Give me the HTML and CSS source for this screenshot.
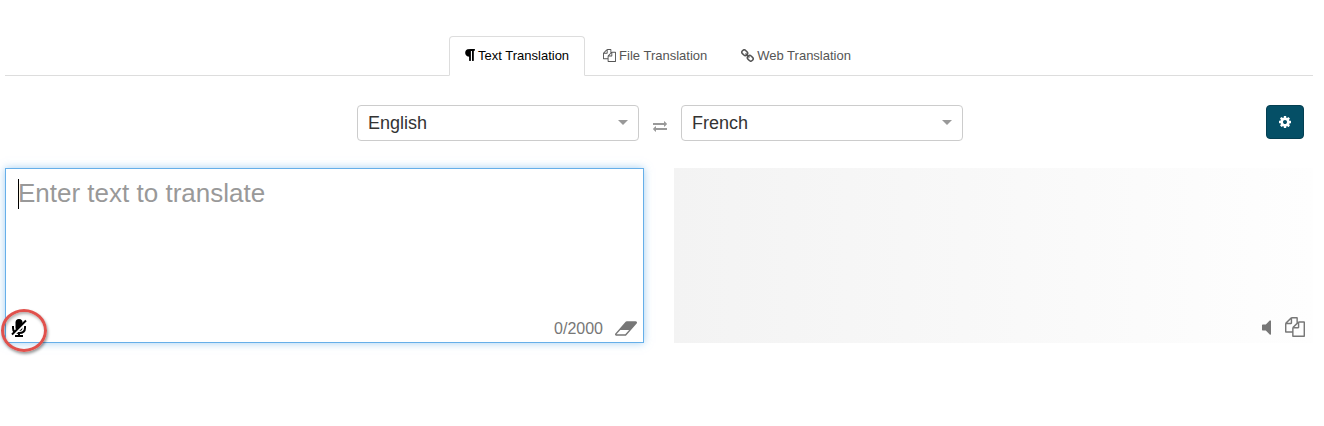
FILE: index.html
```html
<!DOCTYPE html>
<html lang="en">
<head>
  <meta charset="UTF-8">
  <meta name="viewport" content="width=device-width, initial-scale=1">
  <title>Text Translation</title>
  <link rel="stylesheet" href="styles.css">
</head>
<body>
  <nav class="tabs">
    <a class="tab active" href="#text">
      <svg class="icon-paragraph" viewBox="256 128 1280 1536"><path d="M1534 189v73q0 29-18.5 61t-42.5 32q-50 0-54 1-26 6-32 31-3 11-3 64v1152q0 25-18 43t-43 18h-108q-25 0-43-18t-18-43v-1218h-143v1218q0 25-17.5 43t-43.5 18h-108q-26 0-43.5-18t-17.5-43v-496q-147-12-245-59-126-58-192-179-64-117-64-259 0-166 88-286 88-118 209-159 111-37 417-37h479q25 0 43 18t18 43z"/></svg>
      Text Translation
    </a>
    <a class="tab" href="#file">
      <svg class="icon-tab" viewBox="0 0 1792 1792"><path d="M1696 384q40 0 68 28t28 68v1216q0 40-28 68t-68 28h-960q-40 0-68-28t-28-68v-288h-544q-40 0-68-28t-28-68v-672q0-40 20-88t48-76l408-408q28-28 76-48t88-20h416q40 0 68 28t28 68v328q68-40 128-40h416zm-544 213l-299 299h299v-299zm-640-384l-299 299h299v-299zm196 647l316-316v-416h-384v416q0 40-28 68t-68 28h-416v640h512v-256q0-40 20-88t48-76zm956 804v-1152h-384v416q0 40-28 68t-68 28h-416v640h896z"/></svg>
      File Translation
    </a>
    <a class="tab" href="#web">
      <svg class="icon-tab icon-link" viewBox="0 0 26 26"><rect x="1.500" y="3" width="12" height="9" rx="4" transform="rotate(45 7.500 7.500)"/><rect x="12.500" y="14" width="12" height="9" rx="4" transform="rotate(45 18.500 18.500)"/><path d="M9 9l8 8"/></svg>
      Web Translation
    </a>
  </nav>

  <main>
    <div class="toolbar">
      <div class="languages">
        <div class="language">
          <select id="source" aria-label="Source language">
            <option>English</option>
            <option>French</option>
          </select>
        </div>
        <button class="icon-button swap" type="button" aria-label="Swap languages">
          <svg viewBox="0 128 1792 1536"><path d="M1792 1184v192q0 13-9.5 22.5t-22.5 9.5h-1376v192q0 13-9.5 22.5t-22.5 9.5q-12 0-24-10l-319-320q-9-9-9-22 0-14 9-23l320-320q9-9 23-9 13 0 22.5 9.5t9.5 22.5v192h1376q13 0 22.5 9.5t9.5 22.5zm0-544q0 14-9 23l-320 320q-9 9-23 9-13 0-22.5-9.5t-9.5-22.5v-192h-1376q-13 0-22.5-9.5t-9.5-22.5v-192q0-13 9.5-22.5t22.5-9.5h1376v-192q0-14 9-23t23-9q12 0 24 10l319 319q9 9 9 23z"/></svg>
        </button>
        <div class="language">
          <select id="target" aria-label="Target language">
            <option>French</option>
            <option>English</option>
          </select>
        </div>
      </div>
      <button class="settings" type="button" aria-label="Settings">
        <svg viewBox="128 128 1536 1536"><path d="M1152 896q0-106-75-181t-181-75-181 75-75 181 75 181 181 75 181-75 75-181zm512-109v222q0 12-8 23t-20 13l-185 28q-19 54-39 91 35 50 107 138 10 12 10 25t-9 23q-27 37-99 108t-94 71q-12 0-26-9l-138-108q-44 23-91 38-16 136-29 186-7 28-36 28h-222q-14 0-24.5-8.5t-11.5-21.5l-28-184q-49-16-90-37l-141 107q-10 9-25 9-14 0-25-11-126-114-165-168-7-10-7-23 0-12 8-23 15-21 51-66.5t54-70.5q-27-50-41-99l-183-27q-13-2-21-12.5t-8-23.5v-222q0-12 8-23t19-13l186-28q14-46 39-92-40-57-107-138-10-12-10-24 0-10 9-23 26-36 98.5-107.5t94.5-71.5q13 0 26 10l138 107q44-23 91-38 16-136 29-186 7-28 36-28h222q14 0 24.5 8.5t11.5 21.5l28 184q49 16 90 37l142-107q9-9 24-9 13 0 25 10 129 119 165 170 7 8 7 22 0 12-8 23-15 21-51 66.5t-54 70.5q26 50 41 98l183 28q13 2 21 12.5t8 23.5z"/></svg>
      </button>
    </div>

    <div class="panels">
      <div class="panel input-panel">
        <textarea id="text" aria-label="Text to translate" placeholder="Enter text to translate"></textarea>
        <span class="caret"></span>
        <div class="panel-footer">
          <button class="icon-button mic" type="button" aria-label="Microphone">
            <svg viewBox="0 0 16 18">
              <rect x="4.500" y="0" width="7" height="12" rx="3.500"/>
              <path class="line" d="M2 7v2q0 5 6 5t6-5v-2M8 14v3M4 17h8"/>
              <path class="gap" d="M1 17L16 2.500"/>
              <path class="line" d="M1 15.500L15 1.500"/>
            </svg>
            <span class="ring"></span>
          </button>
          <span class="counter">0/2000</span>
          <button class="icon-button eraser" type="button" aria-label="Clear text">
            <svg viewBox="-64 256 1920 1280"><path d="M832 1408l336-384h-768l-336 384h768zm1013-1077q15 34 9.500 71.500t-30.500 65.500l-896 1024q-38 44-96 44h-768q-38 0-69.500-20.500t-47.500-54.500q-15-34-9.500-71.500t30.500-65.500l896-1024q38-44 96-44h768q38 0 69.500 20.500t47.500 54.500z"/></svg>
          </button>
        </div>
      </div>

      <div class="panel output-panel">
        <div class="panel-footer">
          <button class="icon-button speaker" type="button" aria-label="Listen">
            <svg viewBox="320 256 768 1280"><path d="M1088 352v1088q0 26-19 45t-45 19-45-19l-333-333h-262q-26 0-45-19t-19-45v-384q0-26 19-45t45-19h262l333-333q19-19 45-19t45 19 19 45z"/></svg>
          </button>
          <button class="icon-button copy" type="button" aria-label="Copy translation">
            <svg viewBox="0 0 1792 1792"><path d="M1696 384q40 0 68 28t28 68v1216q0 40-28 68t-68 28h-960q-40 0-68-28t-28-68v-288h-544q-40 0-68-28t-28-68v-672q0-40 20-88t48-76l408-408q28-28 76-48t88-20h416q40 0 68 28t28 68v328q68-40 128-40h416zm-544 213l-299 299h299v-299zm-640-384l-299 299h299v-299zm196 647l316-316v-416h-384v416q0 40-28 68t-68 28h-416v640h512v-256q0-40 20-88t48-76zm956 804v-1152h-384v416q0 40-28 68t-68 28h-416v640h896z"/></svg>
          </button>
        </div>
      </div>
    </div>
  </main>
</body>
</html>
```

FILE: styles.css
```css
* {
  box-sizing: border-box;
}
body {
  min-height: 100vh;
  margin: 0;
  padding: 36px 11px 40px 5px;
  background: #fff;
  color: #333;
  font-family: "Liberation Sans", Arial, sans-serif;
  font-size: 13px;
}
svg {
  display: block;
  fill: currentColor;
}
button,
select,
textarea {
  font-family: inherit;
}
.tabs {
  display: flex;
  justify-content: center;
  gap: 2px;
  padding-right: 2px;
  border-bottom: 1px solid #ddd;
}
.tab {
  display: flex;
  align-items: center;
  gap: 3px;
  height: 40px;
  margin-bottom: -1px;
  padding: 0 15px 2px;
  border: 1px solid transparent;
  border-radius: 4px 4px 0 0;
  color: #555;
  text-decoration: none;
}
.tab.active {
  border-color: #ddd #ddd #fff;
  background: #fff;
  color: #000;
}
.icon-paragraph {
  width: 10px;
  height: 12px;
}
.icon-tab {
  width: 13px;
  height: 13px;
}
.icon-link {
  fill: none;
  stroke: currentColor;
  stroke-width: 3;
}
.toolbar {
  display: grid;
  grid-template-columns: 1fr auto 1fr;
  padding: 29px 9px 27px 11px;
}
.languages {
  grid-column: 2;
  display: flex;
  align-items: center;
  gap: 14px;
}
.language {
  position: relative;
}
.language::after {
  content: "";
  position: absolute;
  top: 15px;
  right: 11px;
  border: 5px solid transparent;
  border-top-color: #999;
  border-bottom: 0;
  pointer-events: none;
}
select {
  display: block;
  appearance: none;
  width: 282px;
  height: 36px;
  padding: 0 10px;
  border: 1px solid #ccc;
  border-radius: 4px;
  background: #fff;
  color: #333;
  font-size: 18px;
}
.icon-button {
  padding: 0;
  border: 0;
  background: none;
  color: #777;
  cursor: pointer;
}
.swap {
  padding-top: 6px;
  color: #999;
}
.swap svg {
  width: 14px;
  height: 12px;
}
.settings {
  justify-self: end;
  display: flex;
  align-items: center;
  justify-content: center;
  width: 38px;
  height: 34px;
  padding: 0;
  border: 1px solid #043f52;
  border-radius: 4px;
  background: #054f66;
  color: #fff;
  cursor: pointer;
}
.settings svg {
  width: 12px;
  height: 12px;
}
.panels {
  display: grid;
  grid-template-columns: 1fr 1fr;
  gap: 30px;
}
.panel {
  position: relative;
  display: flex;
  flex-direction: column;
  justify-content: flex-end;
  min-height: 175px;
}
.input-panel {
  border: 1px solid #66afe9;
  box-shadow: 0 0 8px rgba(102, 175, 233, 0.6);
}
.output-panel {
  padding: 2px;
  background: linear-gradient(to right, #f3f3f3, #fefefe);
}
textarea {
  flex: 1;
  display: block;
  width: 100%;
  padding: 9px 12px 0;
  border: 0;
  outline: 0;
  resize: none;
  background: transparent;
  color: #333;
  font-size: 26px;
  line-height: 30px;
}
textarea::placeholder {
  color: #999;
  opacity: 1;
}
.caret {
  position: absolute;
  top: 10px;
  left: 12px;
  width: 1px;
  height: 30px;
  background: #000;
}
.panel-footer {
  display: flex;
  align-items: center;
  justify-content: flex-end;
  height: 28px;
  padding: 0 6px 0 5px;
}
.mic {
  position: relative;
  margin-right: auto;
  color: #000;
}
.mic svg {
  width: 16px;
  height: 18px;
}
.mic .line,
.mic .gap {
  fill: none;
  stroke: #000;
  stroke-width: 2;
}
.mic .gap {
  stroke: #fff;
  stroke-width: 3;
}
/* highlight around the microphone */
.ring {
  position: absolute;
  top: -10px;
  left: -10px;
  width: 46px;
  height: 43px;
  border: 3px solid #e0514c;
  border-radius: 50%;
  box-shadow: 1px 2px 3px rgba(0, 0, 0, 0.4), inset 1px 2px 3px rgba(0, 0, 0, 0.3);
}
.counter {
  padding-top: 2px;
  color: #777;
  font-size: 16px;
}
.eraser {
  margin-left: 12px;
}
.eraser svg {
  width: 22px;
  height: 15px;
}
.speaker svg {
  width: 9px;
  height: 15px;
}
.copy {
  margin-left: 14px;
}
.copy svg {
  width: 20px;
  height: 20px;
}
```
